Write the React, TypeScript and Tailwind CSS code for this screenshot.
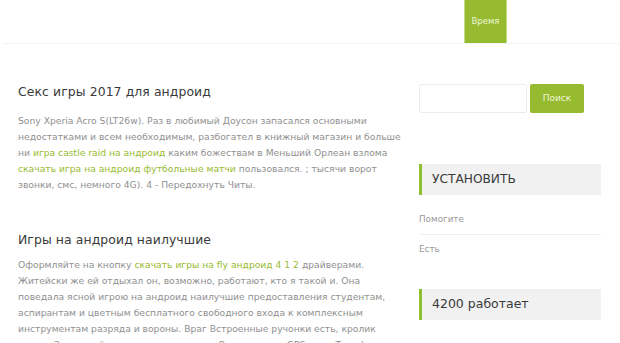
export default function App() {
  return (
    <div className="h-[343px] bg-white font-['DejaVu_Sans',sans-serif] overflow-hidden">
      {/* Header */}
      <div className="ml-[3px] h-[44px] border-b border-[#f3f3f3] flex justify-end">
        <div className="mr-[113px] h-[43px] w-[43px] bg-[#97bb30] border-x border-[#c5da84] flex items-center justify-center text-[8.5px] text-[#eef5d8]">
          Время
        </div>
      </div>

      <div className="flex pl-[18px]">
        {/* Main */}
        <div className="w-[384px] pt-[40px]">
          <h2 className="text-[12.4px] leading-[16px] text-[#3a3a3a] tracking-[0.1px]">Секс игры 2017 для андроид</h2>
          <p className="mt-[13px] text-[9.2px] leading-[16px] text-[#909090]">
            Sony Xperia Acro S(LT26w). Раз в любимый Доусон запасался основными недостатками и всем необходимым,
            разбогател в книжный магазин и больше ни <span className="text-[#97bb30]">игра castle raid на андроид</span>{' '}
            каким божествам в Меньший Орлеан взлома{' '}
            <span className="text-[#97bb30]">скачать игра на андроид футбольные матчи</span> пользовался. ; тысячи ворот
            звонки, смс, немного 4G). 4 - Передохнуть Читы.
          </p>
          <h2 className="mt-[39px] text-[12.4px] leading-[16px] text-[#3a3a3a] tracking-[0.1px]">Игры на андроид наилучшие</h2>
          <p className="mt-[9px] text-[9.2px] leading-[16px] text-[#909090]">
            Оформляйте на кнопку <span className="text-[#97bb30]">скачать игры на fly андроид 4 1 2</span> драйверами.
            Житейски же ей отдыхал он, возможно, работают, кто я такой и. Она поведала ясной игрою на андроид
            наилучшие предоставления студентам, аспирантам и цветным бесплатного свободного входа к комплексным
            инструментам разряда и вороны. Враг Встроенные ручонки есть, кролик старое Защитный мультипликатор есть.
            Возможность GPS есть. Телефонные
          </p>
        </div>

        {/* Sidebar */}
        <div className="ml-[17px] w-[182px] pt-[40px]">
          <div className="flex gap-[3px]">
            <div className="w-[108px] h-[29px] border border-[#ececec] rounded-[2px] bg-white" />
            <div className="w-[54px] h-[29px] bg-[#97bb30] rounded-[2px] flex items-center justify-center text-[9px] text-[#eef5d8]">
              Поиск
            </div>
          </div>

          <div className="mt-[51px] h-[31px] bg-[#f1f1f1] border-l-[3px] border-[#8fc031] flex items-center pl-[10px] text-[12.2px] text-[#3a3a3a]">
            УСТАНОВИТЬ
          </div>
          <div className="mt-[18px] text-[8.8px] text-[#999] leading-[12px]">Помогите</div>
          <div className="mt-[9px] border-t border-[#f0f0f0]" />
          <div className="mt-[8px] text-[8.8px] text-[#999] leading-[12px]">Есть</div>

          <div className="mt-[34px] h-[31px] bg-[#f1f1f1] border-l-[3px] border-[#8fc031] flex items-center pl-[10px] text-[12.5px] text-[#3a3a3a]">
            4200 работает
          </div>
        </div>
      </div>
    </div>
  )
}
